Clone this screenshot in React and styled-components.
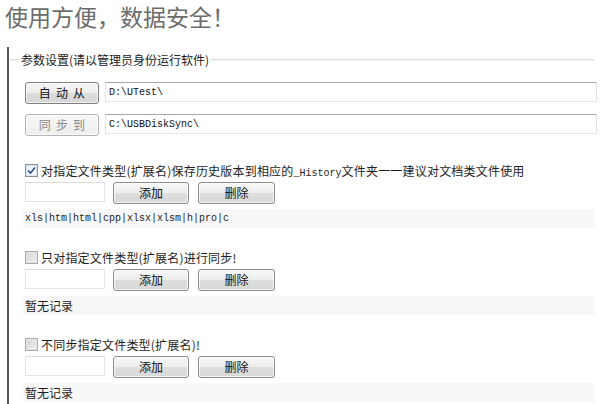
import React from "react";
import styled, { createGlobalStyle, css } from "styled-components";

const GlobalStyle = createGlobalStyle`
  html, body { margin: 0; padding: 0; background: #ffffff; }
  body {
    font-family: "Noto Sans CJK SC", "Liberation Sans", sans-serif;
    color: #1e1e1e;
    overflow: hidden;
  }
`;

const Page = styled.div`
  width: 600px;
  height: 404px;
  overflow: hidden;
`;

const Title = styled.h1`
  margin: 0;
  padding: 0 0 0 5px;
  height: 47px;
  line-height: 32px;
  font-size: 23px;
  font-weight: 400;
  color: #6c6c6c;
  letter-spacing: 0;
`;

const Panel = styled.div`
  margin-left: 7px;
  width: 590px;
  box-sizing: border-box;
  border-left: 2px solid #585858;
  padding: 6px 0 10px 16px;
`;

const LegendRow = styled.div`
  display: flex;
  align-items: center;
  margin: 0 3px 0 -15px;
  height: 14px;
`;

const LegendLine = styled.span`
  height: 0;
  border-top: 1px solid #dadada;
  border-bottom: 1px solid #f4f4f4;
  ${(p) =>
    p.$short
      ? css`
          width: 9px;
          flex: none;
        `
      : css`
          flex: 1;
        `}
`;

const LegendText = styled.span`
  font-size: 12px;
  line-height: 14px;
  padding: 0 3px 0 2px;
  color: #222;
  white-space: nowrap;
`;

const PathRow = styled.div`
  display: flex;
  align-items: flex-start;
  height: 22px;
  margin-top: ${(p) => p.$gap}px;
`;

const buttonBase = css`
  box-sizing: border-box;
  height: 22px;
  padding: 0;
  border-radius: 3px;
  font-family: "Noto Sans CJK SC", "Liberation Sans", sans-serif;
  font-size: 12px;
  line-height: 18px;
  cursor: default;
  flex: none;
`;

const PathButton = styled.button`
  ${buttonBase}
  width: 74px;
  letter-spacing: 1.2px;
  padding-left: 1px;
  border: 1px solid ${(p) => (p.disabled ? "#b4b4b4" : "#7f7f7f")};
  color: ${(p) => (p.disabled ? "#8a8a8a" : "#111")};
  background: ${(p) =>
    p.disabled
      ? "linear-gradient(#f6f6f6, #eeeeee)"
      : "linear-gradient(#f7f7f7 0%, #ececec 50%, #dcdcdc 51%, #d6d6d6 100%)"};
  box-shadow: inset 0 0 0 1px rgba(255, 255, 255, 0.7);
`;

const TextInput = styled.input`
  box-sizing: border-box;
  height: 20px;
  border: 1px solid #e2e6ea;
  border-top-color: #a8a8a8;
  border-radius: 0;
  background: #fff;
  outline: none;
  padding: 0 3px;
  font-family: "Liberation Mono", monospace;
  font-size: 10px;
  color: #111;
`;

const PathInput = styled(TextInput)`
  flex: 1;
  min-width: 0;
  margin-left: 6px;
`;

const Section = styled.div`
  margin-top: ${(p) => p.$gap}px;
`;

const CheckRow = styled.label`
  display: flex;
  align-items: center;
  height: 18px;
  font-size: 12px;
  color: #1e1e1e;
  white-space: nowrap;
  letter-spacing: 0.2px;
`;

const Box = styled.span`
  box-sizing: border-box;
  width: 13px;
  height: 13px;
  flex: none;
  margin-right: 3px;
  border: 1px solid ${(p) => (p.$checked ? "#8f8f8f" : "#a9a9a9")};
  background: ${(p) =>
    p.$checked
      ? "linear-gradient(135deg, #e4eefa, #ffffff)"
      : "linear-gradient(135deg, #d4d4d4, #f1f1f1)"};
  box-shadow: inset 0 0 0 1px ${(p) => (p.$checked ? "#dbe6f3" : "#e6e6e6")};
  display: flex;
  align-items: center;
  justify-content: center;
`;

const Mono = styled.span`
  font-family: "Liberation Mono", monospace;
  font-size: 10px;
  letter-spacing: 0;
`;

const ControlRow = styled.div`
  display: flex;
  align-items: flex-start;
  height: 22px;
  margin-top: 3px;
`;

const SmallInput = styled(TextInput)`
  width: 80px;
  flex: none;
  border-color: #e3e3e3;
  border-top-color: #dcdcdc;
`;

const ActionButton = styled.button`
  ${buttonBase}
  width: ${(p) => p.$w}px;
  margin-left: ${(p) => p.$ml}px;
  border: 1px solid #8c8c8c;
  color: #111;
  background: linear-gradient(#f8f8f8 0%, #ededed 50%, #dedede 51%, #d8d8d8 100%);
  box-shadow: inset 0 0 0 1px rgba(255, 255, 255, 0.75);
`;

const RecordRow = styled.div`
  margin: 5px 2px 0 -2px;
  padding-left: 2px;
  height: 19px;
  line-height: 19px;
  background: #f8f8f8;
  font-size: ${(p) => (p.$mono ? "10px" : "12px")};
  font-family: ${(p) =>
    p.$mono
      ? '"Liberation Mono", monospace'
      : '"Noto Sans CJK SC", "Liberation Sans", sans-serif'};
  color: #1e1e1e;
  white-space: nowrap;
`;

const Check = () => (
  <svg width="9" height="9" viewBox="0 0 9 9">
    <path d="M1 4.5 L3.5 7 L8 1.5" fill="none" stroke="#2a4f8c" strokeWidth="1.6" />
  </svg>
);

const options = [
  {
    gap: 25,
    checked: true,
    label: (
      <>
        对指定文件类型(扩展名)保存历史版本到相应的<Mono>_History</Mono>文件夹一一建议对文档类文件使用
      </>
    ),
    record: "xls|htm|html|cpp|xlsx|xlsm|h|pro|c",
    mono: true,
  },
  {
    gap: 20,
    checked: false,
    label: "只对指定文件类型(扩展名)进行同步!",
    record: "暂无记录",
  },
  {
    gap: 20,
    checked: false,
    label: "不同步指定文件类型(扩展名)!",
    record: "暂无记录",
  },
];

export default function App() {
  return (
    <Page>
      <GlobalStyle />
      <Title>使用方便，数据安全！</Title>
      <Panel>
        <LegendRow>
          <LegendLine $short />
          <LegendText>参数设置(请以管理员身份运行软件)</LegendText>
          <LegendLine />
        </LegendRow>
        <PathRow $gap={15}>
          <PathButton>自 动 从</PathButton>
          <PathInput defaultValue={"D:\\UTest\\"} readOnly />
        </PathRow>
        <PathRow $gap={10}>
          <PathButton disabled>同 步 到</PathButton>
          <PathInput defaultValue={"C:\\USBDiskSync\\"} readOnly />
        </PathRow>
        {options.map((o, i) => (
          <Section key={i} $gap={o.gap}>
            <CheckRow>
              <Box $checked={o.checked}>{o.checked && <Check />}</Box>
              <span>{o.label}</span>
            </CheckRow>
            <ControlRow>
              <SmallInput />
              <ActionButton $w={76} $ml={8}>添加</ActionButton>
              <ActionButton $w={77} $ml={9}>删除</ActionButton>
            </ControlRow>
            <RecordRow $mono={o.mono}>{o.record}</RecordRow>
          </Section>
        ))}
      </Panel>
    </Page>
  );
}
